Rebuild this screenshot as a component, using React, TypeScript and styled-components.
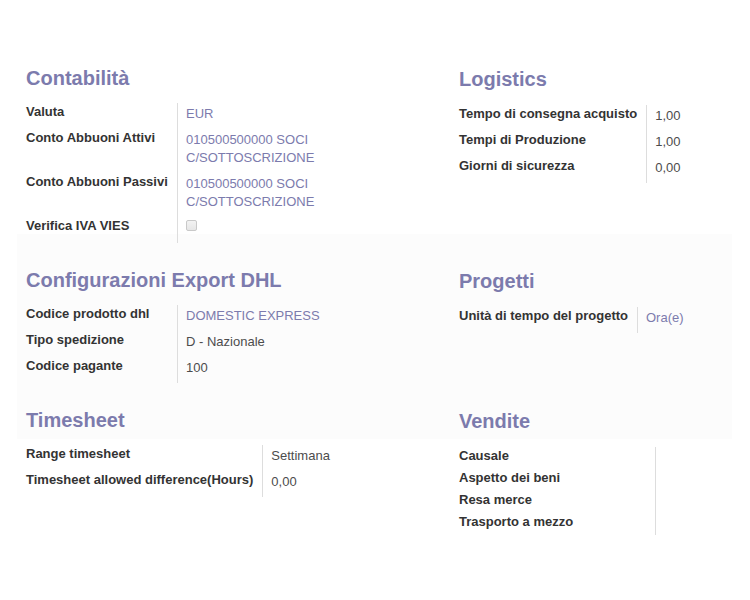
import React from 'react';
import styled, { createGlobalStyle } from 'styled-components';

const GlobalStyle = createGlobalStyle`
  html, body { margin: 0; padding: 0; background: #ffffff; }
  body {
    font-family: "Liberation Sans", Arial, Helvetica, sans-serif;
    font-size: 13px;
    color: #4c4c4c;
  }
`;

const Page = styled.div`
  width: 750px;
  height: 600px;
  box-sizing: border-box;
  padding: 66px 18px 0 17px;
  overflow: hidden;
`;

const Row = styled.div<{ $pull?: number }>`
  position: relative;
  display: grid;
  grid-template-columns: 348px minmax(0, 1fr);
  column-gap: 85px;
  padding-left: 9px;
  margin-top: ${(p) => p.$pull ?? 0}px;
`;

const Band = styled.div`
  background: #fcfcfc;
  margin-top: -9px;
  padding: 34px 0 56px;
`;

const Group = styled.section<{ $offset?: number }>`
  margin-top: ${(p) => p.$offset ?? 0}px;
  min-width: 0;
`;

const Title = styled.h2<{ $gap?: number }>`
  margin: 0 0 ${(p) => p.$gap ?? 13}px;
  font-size: 20px;
  line-height: 24px;
  font-weight: bold;
  color: #7c7bad;
`;

const Fields = styled.div<{ $labelWidth?: number }>`
  display: grid;
  grid-template-columns: ${(p) => (p.$labelWidth ? `${p.$labelWidth}px` : 'max-content')} minmax(0, 1fr);
`;

const Label = styled.div`
  box-sizing: border-box;
  padding: 0 9px 4px 0;
  border-right: 1px solid #dddddd;
  white-space: nowrap;
  font-weight: bold;
  line-height: 18px;
  color: #333333;
`;

const Value = styled.div<{ $link?: boolean }>`
  padding: 2px 0 6px 8px;
  line-height: 18px;
  color: ${(p) => (p.$link ? '#7c7bad' : '#4c4c4c')};
`;

const Checkbox = styled.span`
  display: inline-block;
  vertical-align: top;
  box-sizing: border-box;
  width: 11px;
  height: 11px;
  margin-top: 1px;
  border: 1px solid #c9c9c9;
  border-radius: 2px;
  background: linear-gradient(#f3f3f3, #e6e6e6);
`;

type Field = { label: string; value?: React.ReactNode; link?: boolean };

const FieldGroup: React.FC<{
  title: string;
  fields: Field[];
  offset?: number;
  titleGap?: number;
  labelWidth?: number;
}> = ({ title, fields, offset, titleGap, labelWidth }) => (
  <Group $offset={offset}>
    <Title $gap={titleGap}>{title}</Title>
    <Fields $labelWidth={labelWidth}>
      {fields.map((f) => (
        <React.Fragment key={f.label}>
          <Label>{f.label}</Label>
          <Value $link={f.link}>{f.value}</Value>
        </React.Fragment>
      ))}
    </Fields>
  </Group>
);

export default function App() {
  return (
    <>
      <GlobalStyle />
      <Page>
        <Row>
          <FieldGroup
            title="Contabilità"
            labelWidth={152}
            fields={[
              { label: 'Valuta', value: 'EUR', link: true },
              { label: 'Conto Abbuoni Attivi', value: '010500500000 SOCI C/SOTTOSCRIZIONE', link: true },
              { label: 'Conto Abbuoni Passivi', value: '010500500000 SOCI C/SOTTOSCRIZIONE', link: true },
              { label: 'Verifica IVA VIES', value: <Checkbox role="checkbox" aria-checked="false" /> },
            ]}
          />
          <FieldGroup
            title="Logistics"
            offset={1}
            titleGap={14}
            fields={[
              { label: 'Tempo di consegna acquisto', value: '1,00' },
              { label: 'Tempi di Produzione', value: '1,00' },
              { label: 'Giorni di sicurezza', value: '0,00' },
            ]}
          />
        </Row>
        <Band>
          <Row>
            <FieldGroup
              title="Configurazioni Export DHL"
              labelWidth={152}
              fields={[
                { label: 'Codice prodotto dhl', value: 'DOMESTIC EXPRESS', link: true },
                { label: 'Tipo spedizione', value: 'D - Nazionale' },
                { label: 'Codice pagante', value: '100' },
              ]}
            />
            <FieldGroup
              title="Progetti"
              offset={1}
              titleGap={14}
              fields={[{ label: 'Unità di tempo del progetto', value: 'Ora(e)', link: true }]}
            />
          </Row>
        </Band>
        <Row $pull={-31}>
          <FieldGroup
            title="Timesheet"
            fields={[
              { label: 'Range timesheet', value: 'Settimana' },
              { label: 'Timesheet allowed difference(Hours)', value: '0,00' },
            ]}
          />
          <FieldGroup
            title="Vendite"
            offset={1}
            titleGap={14}
            labelWidth={197}
            fields={[
              { label: 'Causale' },
              { label: 'Aspetto dei beni' },
              { label: 'Resa merce' },
              { label: 'Trasporto a mezzo' },
            ]}
          />
        </Row>
      </Page>
    </>
  );
}
